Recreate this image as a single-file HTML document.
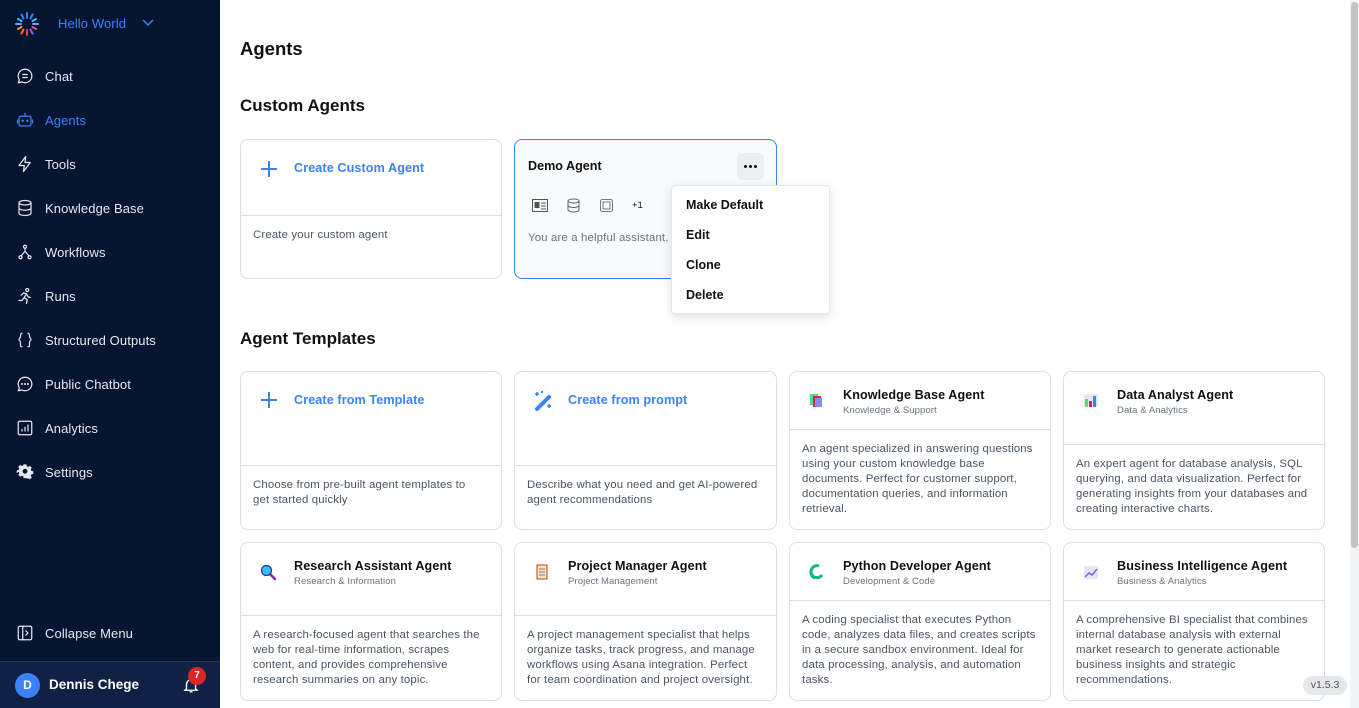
<!DOCTYPE html>
<html><head><meta charset="utf-8"><style>
*{box-sizing:border-box;margin:0;padding:0}
body{width:1359px;height:708px;overflow:hidden;font-family:"Liberation Sans",sans-serif;background:#fff;position:relative}
.sb{position:absolute;left:0;top:0;width:220px;height:708px;background:#061532}
.nav{position:absolute;left:16px;display:flex;align-items:center;color:#e6e9f0;font-size:13px;letter-spacing:.1px}
.nav svg{width:18px;height:18px;margin-right:11px;fill:none;stroke:#e6e9f0;stroke-width:1.6;stroke-linecap:round;stroke-linejoin:round}
.nav.act{color:#3b82f6}.nav.act svg{stroke:#3b82f6}
.user{position:absolute;left:0;top:661px;width:220px;height:47px;background:#0f2145;border-top:1px solid #26385c}
.card{position:absolute;border:1px solid #d9dde6;border-radius:8px;background:#fff;overflow:hidden}
.hd{position:absolute;left:0;right:0;top:0;border-bottom:1px solid #d9dde6}
.ds{position:absolute;left:12px;right:4px;font-size:11.4px;line-height:15px;color:#4b5563;white-space:nowrap;letter-spacing:.15px}
.ct{position:absolute;left:53px;top:16px;font-size:12.6px;font-weight:bold;color:#111;letter-spacing:.1px}
.cs{position:absolute;left:53px;top:33px;font-size:9.5px;color:#6b7280;letter-spacing:.1px}
.ic{position:absolute;left:18px;top:19px;width:18px;height:18px}
.bl{position:absolute;left:53px;top:21px;font-size:12.6px;font-weight:bold;color:#3b82f6;letter-spacing:.1px}
h2{position:absolute;left:240px;font-size:17px;font-weight:bold;color:#111}
.mi{position:absolute;left:14px;font-size:12.5px;font-weight:bold;color:#111}
</style></head><body>
<div class="sb">
 <svg style="position:absolute;left:14px;top:11px" width="26" height="26" viewBox="0 0 26 26">
  <g stroke-width="2" stroke-linecap="round">
  <line x1="13" y1="2" x2="13" y2="7" stroke="#3b82f6"/><line x1="18.5" y1="3.5" x2="16.5" y2="7.5" stroke="#3b82f6"/><line x1="7.5" y1="3.5" x2="9.5" y2="7.5" stroke="#3b82f6"/>
  <line x1="22" y1="8" x2="18.5" y2="10" stroke="#38bdf8"/><line x1="4" y1="8" x2="7.5" y2="10" stroke="#38bdf8"/>
  <line x1="2" y1="13" x2="7" y2="13" stroke="#60a5fa"/><line x1="19" y1="13" x2="24" y2="13" stroke="#60a5fa"/>
  <line x1="4" y1="18" x2="7.5" y2="16" stroke="#f59e0b"/><line x1="22" y1="18" x2="18.5" y2="16" stroke="#ec4899"/>
  <line x1="7.5" y1="22.5" x2="9.5" y2="18.5" stroke="#f97316"/><line x1="18.5" y1="22.5" x2="16.5" y2="18.5" stroke="#a855f7"/><line x1="13" y1="24" x2="13" y2="19" stroke="#ef4444"/></g></svg>
 <div style="position:absolute;left:58px;top:16px;color:#3b82f6;font-size:13px;letter-spacing:.1px">Hello World</div>
 <svg style="position:absolute;left:142px;top:18px" width="12" height="10" viewBox="0 0 12 10"><path d="M1 2l5 5 5-5" fill="none" stroke="#3b82f6" stroke-width="1.5"/></svg>

 <div class="nav" style="top:67px"><svg viewBox="0 0 24 24"><path d="M12 3a9 9 0 1 1-4 17l-5 1 1.5-4A9 9 0 0 1 12 3z"/><path d="M9 10h6M9 14h6"/></svg>Chat</div>
 <div class="nav act" style="top:111px"><svg viewBox="0 0 24 24"><rect x="4" y="7" width="16" height="13" rx="2"/><path d="M12 3v4M2 12v4M22 12v4"/><circle cx="9" cy="13" r=".8"/><circle cx="15" cy="13" r=".8"/></svg>Agents</div>
 <div class="nav" style="top:155px"><svg viewBox="0 0 24 24"><path d="M13 2L4 14h7l-1 8 9-12h-7z"/></svg>Tools</div>
 <div class="nav" style="top:199px"><svg viewBox="0 0 24 24"><ellipse cx="12" cy="5" rx="8" ry="3"/><path d="M4 5v14c0 1.7 3.6 3 8 3s8-1.3 8-3V5M4 12c0 1.7 3.6 3 8 3s8-1.3 8-3"/></svg>Knowledge Base</div>
 <div class="nav" style="top:243px"><svg viewBox="0 0 24 24"><circle cx="12" cy="5" r="2"/><circle cx="6" cy="19" r="2"/><circle cx="18" cy="19" r="2"/><path d="M12 7v4M12 11l-5 6M12 11l5 6"/></svg>Workflows</div>
 <div class="nav" style="top:287px"><svg viewBox="0 0 24 24"><circle cx="15" cy="4" r="2"/><path d="M10 8l4 1 2 4 3 1M14 9l-3 5 4 3-1 5M11 14l-3 4H4M10 8l-3 3"/></svg>Runs</div>
 <div class="nav" style="top:331px"><svg viewBox="0 0 24 24"><path d="M8 3c-2 0-2 2-2 4s-2 3-2 5c0 0 2 1 2 5s0 4 2 4M16 3c2 0 2 2 2 4s2 3 2 5c0 0-2 1-2 5s0 4-2 4"/></svg>Structured Outputs</div>
 <div class="nav" style="top:375px"><svg viewBox="0 0 24 24"><path d="M12 3a9 9 0 1 1-4 17l-5 1 1.5-4A9 9 0 0 1 12 3z"/><circle cx="8" cy="12" r=".6"/><circle cx="12" cy="12" r=".6"/><circle cx="16" cy="12" r=".6"/></svg>Public Chatbot</div>
 <div class="nav" style="top:419px"><svg viewBox="0 0 24 24"><rect x="3" y="3" width="18" height="18" rx="2"/><path d="M8 16v-2M12 16v-5M16 16V8"/></svg>Analytics</div>
 <div class="nav" style="top:463px"><svg viewBox="0 0 24 24" style="fill:#e6e9f0;stroke:none"><path d="M10 2h4l.6 2.8 2 .9 2.4-1.6 2.8 2.8-1.6 2.4.9 2 2.8.6v4l-2.8.6-.9 2 1.6 2.4-2.8 2.8-2.4-1.6-2 .9L14 22h-4l-.6-2.8-2-.9-2.4 1.6-2.8-2.8 1.6-2.4-.9-2L0 14.6v-4l2.8-.6.9-2-1.6-2.4 2.8-2.8 2.4 1.6 2-.9zM12 8.5a3.5 3.5 0 1 0 0 7 3.5 3.5 0 0 0 0-7z" transform="translate(1 0) scale(.92)"/></svg>Settings</div>
 <div class="nav" style="top:624px"><svg viewBox="0 0 24 24"><rect x="3" y="3" width="18" height="18" rx="2"/><path d="M9 3v18M13 9l3 3-3 3"/></svg>Collapse Menu</div>
 <div class="user">
  <div style="position:absolute;left:15px;top:11px;width:25px;height:25px;border-radius:50%;background:#3b82f6;color:#fff;font-size:12px;font-weight:bold;text-align:center;line-height:25px">D</div>
  <div style="position:absolute;left:49px;top:15px;color:#fff;font-size:13.5px;font-weight:bold">Dennis Chege</div>
  <svg style="position:absolute;left:182px;top:14px" width="18" height="18" viewBox="0 0 24 24"><path d="M6 17V11a6 6 0 0 1 12 0v6l2 2H4zM10 21h4" fill="none" stroke="#fff" stroke-width="1.8"/></svg>
  <div style="position:absolute;left:188px;top:5px;width:18px;height:18px;border-radius:50%;background:#dc2626;color:#fff;font-size:10px;font-weight:bold;text-align:center;line-height:18px">7</div>
 </div>
</div>

<div style="position:absolute;left:240px;top:38px;font-size:18.5px;font-weight:bold;color:#111">Agents</div>
<h2 style="top:96px">Custom Agents</h2>

<div class="card" style="left:240px;top:139px;width:262px;height:140px">
 <div class="hd" style="height:76px"></div>
 <svg style="position:absolute;left:19px;top:20px" width="18" height="18" viewBox="0 0 18 18"><path d="M9 1v16M1 9h16" stroke="#3b82f6" stroke-width="2"/></svg>
 <div class="bl" style="top:21px">Create Custom Agent</div>
 <div class="ds" style="top:88px">Create your custom agent</div>
</div>

<div class="card" style="left:514px;top:139px;width:263px;height:140px;border-color:#3b82f6;background:#f8fafc">
 <div style="position:absolute;left:13px;top:19px;font-size:12.6px;font-weight:bold;color:#111">Demo Agent</div>
 <div style="position:absolute;left:222px;top:13px;width:27px;height:27px;border-radius:5px;background:#eceef2;display:flex;align-items:center;justify-content:center;gap:2px">
  <span style="width:3px;height:3px;border-radius:50%;background:#111"></span><span style="width:3px;height:3px;border-radius:50%;background:#111"></span><span style="width:3px;height:3px;border-radius:50%;background:#111"></span></div>
 <svg style="position:absolute;left:17px;top:59px" width="16" height="13" viewBox="0 0 16 13"><rect x=".5" y=".5" width="15" height="12" fill="none" stroke="#555"/><rect x="2.5" y="3" width="5" height="6" fill="#555"/><path d="M9 4h5M9 7h5M9 10h5" stroke="#555"/></svg>
 <svg style="position:absolute;left:52px;top:58px" width="13" height="15" viewBox="0 0 13 15"><ellipse cx="6.5" cy="3" rx="5.5" ry="2" fill="none" stroke="#666"/><path d="M1 3v9c0 1 2.5 2 5.5 2s5.5-1 5.5-2V3M1 7.5c0 1 2.5 2 5.5 2s5.5-1 5.5-2" fill="none" stroke="#666"/></svg>
 <svg style="position:absolute;left:85px;top:59px" width="13" height="13" viewBox="0 0 13 13"><rect x=".5" y=".5" width="12" height="12" rx="2" fill="none" stroke="#777"/><rect x="3" y="3" width="7" height="7" fill="none" stroke="#777"/></svg>
 <div style="position:absolute;left:117px;top:60px;font-size:9.5px;color:#111">+1</div>
 <div style="position:absolute;left:13px;top:92px;font-size:11.4px;color:#6b7280;letter-spacing:.15px">You are a helpful assistant.</div>
</div>

<div style="position:absolute;left:671px;top:185px;width:159px;height:129px;background:#fff;border:1px solid #e5e7eb;border-radius:4px;box-shadow:0 3px 10px rgba(0,0,0,.12)">
 <div class="mi" style="top:12px">Make Default</div>
 <div class="mi" style="top:42px">Edit</div>
 <div class="mi" style="top:72px">Clone</div>
 <div class="mi" style="top:102px">Delete</div>
</div>

<h2 style="top:329px">Agent Templates</h2>

<div class="card" style="left:240px;top:371px;width:262px;height:159px">
 <div class="hd" style="height:94px"></div>
 <svg style="position:absolute;left:19px;top:19px" width="18" height="18" viewBox="0 0 18 18"><path d="M9 1v16M1 9h16" stroke="#3b82f6" stroke-width="2"/></svg>
 <div class="bl">Create from Template</div>
 <div class="ds" style="top:106px">Choose from pre-built agent templates to<br>get started quickly</div>
</div>
<div class="card" style="left:514px;top:371px;width:263px;height:159px">
 <div class="hd" style="height:94px"></div>
 <svg style="position:absolute;left:17px;top:18px" width="22" height="22" viewBox="0 0 22 22"><path d="M5 19L17 7" stroke="#3b82f6" stroke-width="4" stroke-linecap="round"/><path d="M5 2v4M3 4h4M17 14v4M15 16h4M10 1v2M9 2h2" stroke="#3b82f6" stroke-width="1.6"/></svg>
 <div class="bl">Create from prompt</div>
 <div class="ds" style="top:106px">Describe what you need and get AI-powered<br>agent recommendations</div>
</div>
<div class="card" style="left:789px;top:371px;width:262px;height:159px">
 <div class="hd" style="height:58px"></div>
 <svg class="ic" viewBox="0 0 18 18" style="top:19px"><rect x="2" y="3" width="8" height="11" fill="#4ade80"/><rect x="5" y="5" width="8" height="11" fill="#e11d48"/><rect x="7" y="7" width="7" height="9" fill="#818cf8"/></svg>
 <div class="ct">Knowledge Base Agent</div><div class="cs">Knowledge &amp; Support</div>
 <div class="ds" style="top:70px">An agent specialized in answering questions<br>using your custom knowledge base<br>documents. Perfect for customer support,<br>documentation queries, and information<br>retrieval.</div>
</div>
<div class="card" style="left:1063px;top:371px;width:262px;height:159px">
 <div class="hd" style="height:73px"></div>
 <svg class="ic" viewBox="0 0 18 18" style="top:19px"><rect x="2" y="3" width="14" height="13" fill="#e5e7eb"/><rect x="3" y="8" width="3" height="8" fill="#4ade80"/><rect x="7" y="10" width="3" height="6" fill="#e11d48"/><rect x="11" y="5" width="3" height="11" fill="#3b82f6"/></svg>
 <div class="ct">Data Analyst Agent</div><div class="cs">Data &amp; Analytics</div>
 <div class="ds" style="top:85px">An expert agent for database analysis, SQL<br>querying, and data visualization. Perfect for<br>generating insights from your databases and<br>creating interactive charts.</div>
</div>

<div class="card" style="left:240px;top:542px;width:262px;height:159px">
 <div class="hd" style="height:73px"></div>
 <svg class="ic" viewBox="0 0 18 18" style="top:20px"><circle cx="7.5" cy="7.5" r="5" fill="#38bdf8" stroke="#1e3a8a" stroke-width="1.2"/><path d="M11 11l5 5" stroke="#7e22ce" stroke-width="2.5" stroke-linecap="round"/></svg>
 <div class="ct">Research Assistant Agent</div><div class="cs">Research &amp; Information</div>
 <div class="ds" style="top:85px">A research-focused agent that searches the<br>web for real-time information, scrapes<br>content, and provides comprehensive<br>research summaries on any topic.</div>
</div>
<div class="card" style="left:514px;top:542px;width:263px;height:159px">
 <div class="hd" style="height:73px"></div>
 <svg class="ic" viewBox="0 0 18 18" style="top:20px"><rect x="4" y="2" width="10" height="14" fill="#fde2c8" stroke="#c2410c"/><path d="M6 6h6M6 9h6M6 12h6" stroke="#777"/></svg>
 <div class="ct">Project Manager Agent</div><div class="cs">Project Management</div>
 <div class="ds" style="top:85px">A project management specialist that helps<br>organize tasks, track progress, and manage<br>workflows using Asana integration. Perfect<br>for team coordination and project oversight.</div>
</div>
<div class="card" style="left:789px;top:542px;width:262px;height:159px">
 <div class="hd" style="height:58px"></div>
 <svg class="ic" viewBox="0 0 18 18" style="top:20px"><path d="M11 3a6 6 0 1 0 3 9M7 15a6 6 0 0 1-3-9" fill="none" stroke="#10b981" stroke-width="3"/></svg>
 <div class="ct">Python Developer Agent</div><div class="cs">Development &amp; Code</div>
 <div class="ds" style="top:70px">A coding specialist that executes Python<br>code, analyzes data files, and creates scripts<br>in a secure sandbox environment. Ideal for<br>data processing, analysis, and automation<br>tasks.</div>
</div>
<div class="card" style="left:1063px;top:542px;width:262px;height:159px">
 <div class="hd" style="height:58px"></div>
 <svg class="ic" viewBox="0 0 18 18" style="top:20px"><rect x="2" y="3" width="14" height="13" fill="#e9e5f5"/><path d="M3 14l4-4 3 2 5-6" fill="none" stroke="#6366f1" stroke-width="1.5"/></svg>
 <div class="ct">Business Intelligence Agent</div><div class="cs">Business &amp; Analytics</div>
 <div class="ds" style="top:70px">A comprehensive BI specialist that combines<br>internal database analysis with external<br>market research to generate actionable<br>business insights and strategic<br>recommendations.</div>
</div>

<div style="position:absolute;left:1303px;top:676px;width:44px;height:19px;border-radius:10px;background:#e5e7eb;color:#555;font-size:10.5px;text-align:center;line-height:19px">v1.5.3</div>
<div style="position:absolute;left:1350px;top:0;width:9px;height:708px;background:#f3f4f6"></div>
<div style="position:absolute;left:1351px;top:2px;width:7px;height:546px;border-radius:4px;background:#c4c4c4"></div>
</body></html>
